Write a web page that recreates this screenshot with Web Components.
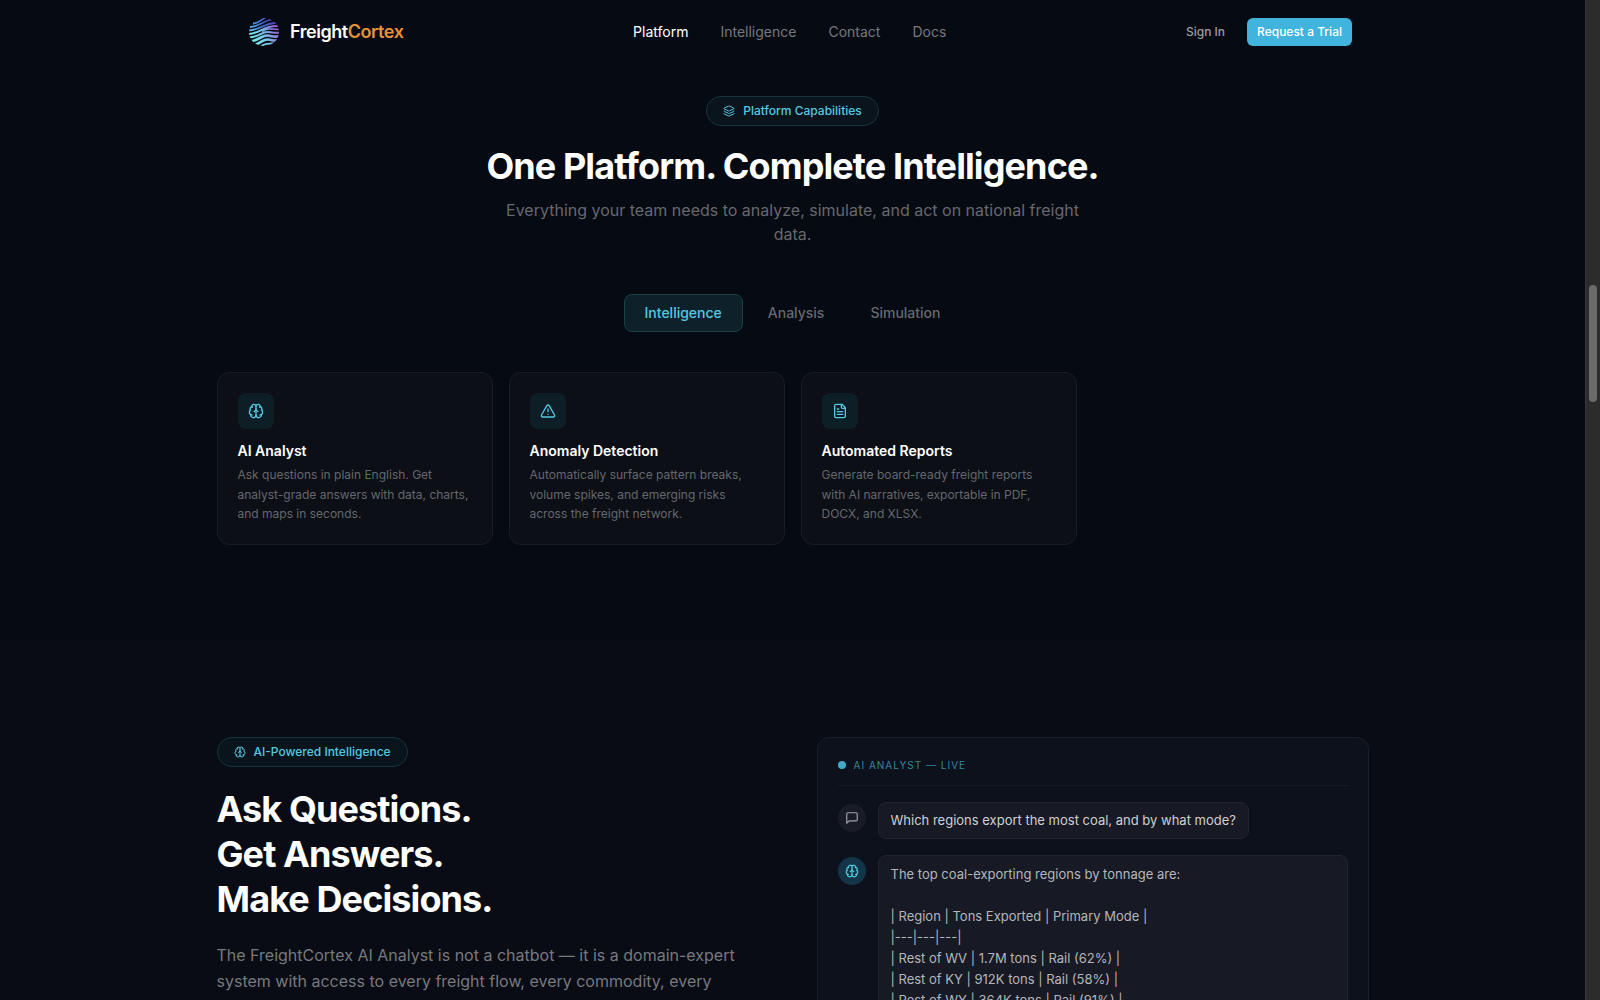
<!DOCTYPE html>
<html lang="en">
<head>
<meta charset="utf-8">
<title>FreightCortex — Platform</title>
<style>
  html, body { margin: 0; height: 100%; overflow: hidden; background: #060a12; }
  body { font-family: Inter, "Liberation Sans", sans-serif; color: #fff; -webkit-font-smoothing: antialiased; }
</style>
</head>
<body>
<fc-app></fc-app>
<script>
const ICONS = {
  brain: '<path d="M12 18V5"/><path d="M15 13a4.17 4.17 0 0 1-3-4 4.17 4.17 0 0 1-3 4"/><path d="M17.598 6.5A3 3 0 1 0 12 5a3 3 0 1 0-5.598 1.5"/><path d="M17.997 5.125a4 4 0 0 1 2.526 5.77"/><path d="M18 18a4 4 0 0 0 2-7.464"/><path d="M19.967 17.483A4 4 0 1 1 12 18a4 4 0 1 1-7.967-.517"/><path d="M6 18a4 4 0 0 1-2-7.464"/><path d="M6.003 5.125a4 4 0 0 0-2.526 5.77"/>',
  alert: '<path d="m21.73 18-8-14a2 2 0 0 0-3.48 0l-8 14A2 2 0 0 0 4 21h16a2 2 0 0 0 1.73-3"/><path d="M12 9v4"/><path d="M12 17h.01"/>',
  file: '<path d="M15 2H6a2 2 0 0 0-2 2v16a2 2 0 0 0 2 2h12a2 2 0 0 0 2-2V7Z"/><path d="M14 2v4a2 2 0 0 0 2 2h4"/><path d="M10 9H8"/><path d="M16 13H8"/><path d="M16 17H8"/>',
  layers: '<path d="M12.83 2.18a2 2 0 0 0-1.66 0L2.6 6.08a1 1 0 0 0 0 1.83l8.58 3.91a2 2 0 0 0 1.66 0l8.58-3.9a1 1 0 0 0 0-1.83z"/><path d="M2 12a1 1 0 0 0 .58.91l8.6 3.91a2 2 0 0 0 1.65 0l8.58-3.9A1 1 0 0 0 22 12"/><path d="M2 17a1 1 0 0 0 .58.91l8.6 3.91a2 2 0 0 0 1.65 0l8.58-3.9A1 1 0 0 0 22 17"/>',
  message: '<path d="M21 15a2 2 0 0 1-2 2H7l-4 4V5a2 2 0 0 1 2-2h14a2 2 0 0 1 2 2z"/>'
};

function define(name, html) {
  const template = document.createElement('template');
  template.innerHTML = '<style>*{box-sizing:border-box}</style>' + html;
  customElements.define(name, class extends HTMLElement {
    constructor() {
      super();
      this.attachShadow({ mode: 'open' }).append(template.content.cloneNode(true));
    }
  });
}

customElements.define('fc-icon', class extends HTMLElement {
  connectedCallback() {
    if (this.shadowRoot) return;
    this.attachShadow({ mode: 'open' }).innerHTML =
      '<style>:host{display:block;width:var(--icon-size,18px);height:var(--icon-size,18px);flex:none}svg{display:block;width:100%;height:100%}</style>' +
      '<svg viewBox="0 0 24 24" fill="none" stroke="currentColor" stroke-width="2" stroke-linecap="round" stroke-linejoin="round" aria-hidden="true">' +
      ICONS[this.getAttribute('name')] + '</svg>';
  }
});

define('fc-logo', `
<style>
  :host { display: block; }
  a { display: flex; align-items: center; gap: 10px; color: #fff; text-decoration: none; font-size: 18px; line-height: 28px; font-weight: 600; letter-spacing: -0.025em; }
  svg { width: 32px; height: 32px; display: block; }
  span span { color: #e8913c; }
</style>
<a href="#home">
  <svg viewBox="0 0 32 32" aria-hidden="true">
    <defs>
      <linearGradient id="g" gradientUnits="userSpaceOnUse" x1="4" y1="26" x2="30" y2="10"><stop offset="0" stop-color="#74eee4"/><stop offset=".45" stop-color="#78c4ee"/><stop offset=".75" stop-color="#8f86e0"/><stop offset="1" stop-color="#9a50d0"/></linearGradient>
      <linearGradient id="h" gradientUnits="userSpaceOnUse" x1="2" y1="14" x2="28" y2="4"><stop offset="0" stop-color="#5fb4ea"/><stop offset=".5" stop-color="#3f66c8"/><stop offset="1" stop-color="#5a3cae"/></linearGradient>
      <clipPath id="c"><ellipse cx="16" cy="16" rx="15" ry="14"/></clipPath>
    </defs>
    <g clip-path="url(#c)" fill="none">
      <g stroke="url(#h)" stroke-width="1.8">
        <path d="M5 7.500C10 7.500 12 4 18 1.500"/>
        <path d="M2 11C10 11 13 6 25 3"/>
        <path d="M0 14.500C11 14.500 14 8 29 6.500"/>
      </g>
      <g stroke="url(#g)">
        <path d="M0 18C12 18 15 9 31 10" stroke-width="2"/>
        <path d="M14 15.500C19 12 24 13 32 13.500" stroke-width="1.500"/>
        <path d="M0 21.500C12 21 13 15.500 20 16S27 17.500 32 16.500" stroke-width="2"/>
        <path d="M1 25.500C11 25 14 18.500 20 19.500S27 21.500 32 20" stroke-width="2.600"/>
        <path d="M6 29C13 27.500 15 23 20 23.500S26 25.500 31 24" stroke-width="2.600"/>
        <path d="M13 30.500C17 27 21 27.500 28 27.500" stroke-width="1.800"/>
      </g>
    </g>
  </svg>
  <span>Freight<span>Cortex</span></span>
</a>`);

define('fc-nav', `
<style>
  :host { display: block; position: absolute; top: 0; left: 0; right: 0; z-index: 2; }
  header { max-width: 1152px; height: 64px; margin: 0 auto; padding: 0 24px; display: flex; align-items: center; justify-content: space-between; }
  nav { display: flex; gap: 32px; font-size: 14px; line-height: 20px; }
  a { color: #76787e; text-decoration: none; }
  a[aria-current] { color: #fff; }
  .actions { display: flex; gap: 12px; }
  button { height: 28px; padding: 0 10px; border: 0; border-radius: 6px; background: none; color: #9a9ca2; font: 500 12px/16px Inter, sans-serif; }
  .primary { background: #40b4dc; color: #fff; }
</style>
<header>
  <fc-logo></fc-logo>
  <nav><a href="#platform" aria-current="page">Platform</a><a href="#intelligence">Intelligence</a><a href="#contact">Contact</a><a href="#docs">Docs</a></nav>
  <div class="actions"><button type="button">Sign In</button><button type="button" class="primary">Request a Trial</button></div>
</header>`);

define('fc-badge', `
<style>
  :host { display: inline-flex; align-items: center; gap: 8px; padding: 6px 16px; border: 1px solid #16343d; border-radius: 15px; background: #09141c; color: #56c8e0; font-size: 12px; line-height: 16px; font-weight: 500; --icon-size: 12px; }
</style>
<slot name="icon"></slot><slot></slot>`);

define('fc-tabs', `
<style>
  :host { display: block; }
  div { display: flex; justify-content: center; gap: 4px; }
  button { padding: 8px 20px; border: 1px solid transparent; border-radius: 8px; background: none; color: #67696f; font: 500 14px/20px Inter, sans-serif; }
  [aria-selected=true] { background: #0e212b; border-color: #174049; color: #56c8e0; }
</style>
<div role="tablist">
  <button type="button" role="tab" aria-selected="true">Intelligence</button>
  <button type="button" role="tab" aria-selected="false">Analysis</button>
  <button type="button" role="tab" aria-selected="false">Simulation</button>
</div>`);

define('fc-feature', `
<style>
  :host { display: block; padding: 20px; border: 1px solid #191c23; border-radius: 12px; background: #0c0f16; }
  .tile { width: 36px; height: 36px; display: grid; place-items: center; border-radius: 8px; background: #0e1e27; color: #56c8e0; --icon-size: 16px; }
  h3 { margin: 12px 0 4px; font-size: 14px; line-height: 20px; font-weight: 600; }
  p { margin: 0; color: #65676d; font-size: 12px; line-height: 1.625; }
</style>
<div class="tile"><slot name="icon"></slot></div>
<h3><slot name="title"></slot></h3>
<p><slot></slot></p>`);

define('fc-message', `
<style>
  :host { display: flex; align-items: flex-start; gap: 12px; --icon-size: 14px; }
  .avatar { flex: none; width: 28px; height: 28px; margin-top: 2px; display: grid; place-items: center; border-radius: 50%; background: #191c26; color: #a0a2a8; }
  :host([from=ai]) .avatar { background: #143447; color: #56c8e0; }
  .bubble { padding: 7px 12px; border: 1px solid #21242e; border-radius: 8px; background: #171a25; color: #cfd0d4; font-size: 13px; line-height: 1.625; white-space: pre-line; }
  :host([from=ai]) .bubble { flex: 1; padding: 8px 12px; color: #b4b6bb; }
</style>
<div class="avatar"><slot name="icon"></slot></div>
<div class="bubble"><slot></slot></div>`);

define('fc-chat', `
<style>
  :host { display: block; padding: 20px; border: 1px solid #1a1e29; border-radius: 12px; background: #0d111c; }
  header { display: flex; align-items: center; gap: 8px; padding-bottom: 12px; margin-bottom: 16px; border-bottom: 1px solid #151a24; color: #37859b; font-size: 10px; line-height: 15px; letter-spacing: 1px; text-transform: uppercase; }
  i { width: 8px; height: 8px; border-radius: 50%; background: #3fa9c9; }
  .log { display: flex; flex-direction: column; gap: 16px; }
</style>
<header><i></i><span>AI Analyst — Live</span></header>
<div class="log"><slot></slot></div>`);

define('fc-scrollbar', `
<style>
  :host { display: block; flex: none; width: 15px; height: 100vh; background: #2c2c2c; border-left: 1px solid #383838; position: relative; z-index: 3; }
  div { width: 8px; height: 11.7%; margin: 0 auto; border-radius: 4px; background: #6b6b6b; position: relative; top: 28.5%; }
</style>
<div></div>`);

define('fc-app', `
<style>
  :host { display: flex; height: 100vh; position: relative; overflow: hidden; }
  main { flex: 1; min-width: 0; }
  .wrap { max-width: 1152px; margin: 0 auto; }
  #platform { padding: 96px 0; background: #060a12; text-align: center; }
  #intelligence { padding: 96px 0; background: #090c14; }
  h1, h2 { margin: 0; font-size: 36px; font-weight: 700; letter-spacing: -0.025em; }
  h1 { margin-top: 20px; line-height: 40px; }
  .lead { max-width: 576px; margin: 12px auto 48px; color: #66686e; font-size: 16px; line-height: 24px; }
  .grid { display: grid; grid-template-columns: repeat(4, 1fr); gap: 16px; margin-top: 40px; text-align: left; }
  .split { display: grid; grid-template-columns: 1fr 1fr; gap: 48px; align-items: start; }
  h2 { margin: 20px 0; line-height: 45px; }
  .copy p { margin: 0; color: #77797f; font-size: 16px; line-height: 26px; }
</style>
<fc-nav></fc-nav>
<main>
  <section id="platform">
    <div class="wrap">
      <fc-badge><fc-icon slot="icon" name="layers"></fc-icon>Platform Capabilities</fc-badge>
      <h1>One Platform. Complete Intelligence.</h1>
      <p class="lead">Everything your team needs to analyze, simulate, and act on national freight data.</p>
      <fc-tabs></fc-tabs>
      <div class="grid">
        <fc-feature><fc-icon slot="icon" name="brain"></fc-icon><span slot="title">AI Analyst</span>Ask questions in plain English. Get analyst-grade answers with data, charts, and maps in seconds.</fc-feature>
        <fc-feature><fc-icon slot="icon" name="alert"></fc-icon><span slot="title">Anomaly Detection</span>Automatically surface pattern breaks, volume spikes, and emerging risks across the freight network.</fc-feature>
        <fc-feature><fc-icon slot="icon" name="file"></fc-icon><span slot="title">Automated Reports</span>Generate board-ready freight reports with AI narratives, exportable in PDF, DOCX, and XLSX.</fc-feature>
      </div>
    </div>
  </section>
  <section id="intelligence">
    <div class="wrap split">
      <div class="copy">
        <fc-badge><fc-icon slot="icon" name="brain"></fc-icon>AI-Powered Intelligence</fc-badge>
        <h2>Ask Questions.<br>Get Answers.<br>Make Decisions.</h2>
        <p>The FreightCortex AI Analyst is not a chatbot — it is a domain-expert system with access to every freight flow, every commodity, every</p>
      </div>
      <fc-chat>
        <fc-message from="user"><fc-icon slot="icon" name="message"></fc-icon>Which regions export the most coal, and by what mode?</fc-message>
        <fc-message from="ai"><fc-icon slot="icon" name="brain"></fc-icon>The top coal-exporting regions by tonnage are:

| Region | Tons Exported | Primary Mode |
|---|---|---|
| Rest of WV | 1.7M tons | Rail (62%) |
| Rest of KY | 912K tons | Rail (58%) |
| Rest of WY | 364K tons | Rail (91%) |</fc-message>
      </fc-chat>
    </div>
  </section>
</main>
<fc-scrollbar></fc-scrollbar>`);
</script>
</body>
</html>
